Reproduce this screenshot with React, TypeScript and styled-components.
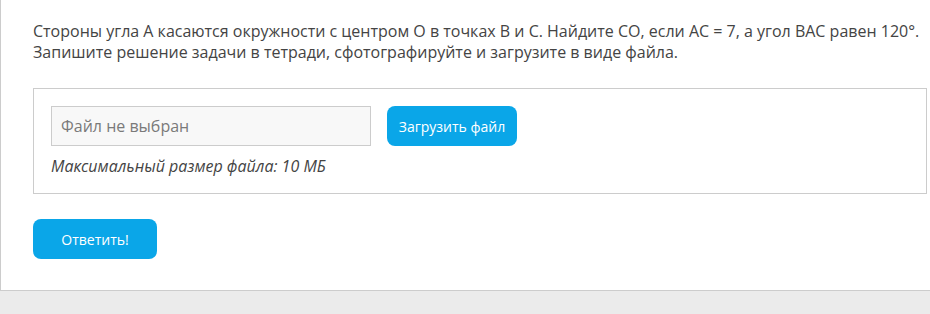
import React from "react";
import styled, { createGlobalStyle } from "styled-components";

const GlobalStyle = createGlobalStyle`
  html, body {
    margin: 0;
    padding: 0;
    background: #ebebeb;
  }
  body {
    font-family: "Open Sans", "Liberation Sans", sans-serif;
    color: #444;
  }
`;

const Panel = styled.div`
  background: #fff;
  border-left: 1px solid #ccc;
  border-bottom: 1px solid #ccc;
  padding: 21px 0 31px 32px;
`;

const Question = styled.p`
  margin: 0 0 25px;
  font-size: 16px;
  line-height: 21px;
  color: #444;
`;

const UploadBox = styled.div`
  width: 858px;
  border: 1px solid #ccc;
  padding: 17px 17px 16px;
`;

const Row = styled.div`
  display: flex;
  align-items: center;
  gap: 16px;
`;

const FileField = styled.div`
  box-sizing: border-box;
  width: 320px;
  height: 40px;
  border: 1px solid #ccc;
  background: #f8f8f8;
  padding: 0 9px;
  display: flex;
  align-items: center;
  font-size: 16px;
  color: #7a7a7a;
`;

const Button = styled.button<{ $wide?: number }>`
  box-sizing: border-box;
  width: ${(p) => p.$wide ?? 130}px;
  height: 40px;
  border: none;
  border-radius: 8px;
  background: #0aa6e8;
  color: #fff;
  font-family: "Open Sans", "Liberation Sans", sans-serif;
  font-size: 14px;
  padding: 0;
  cursor: pointer;
`;

const Hint = styled.div`
  margin-top: 9px;
  font-size: 16px;
  line-height: 22px;
  font-style: italic;
  color: #444;
`;

const Actions = styled.div`
  margin-top: 25px;
`;

export default function App() {
  return (
    <>
      <GlobalStyle />
      <Panel>
        <Question>
          Стороны угла A касаются окружности с центром O в точках B и C. Найдите CO, если AC = 7, а угол BAC равен 120°.
          <br />
          Запишите решение задачи в тетради, сфотографируйте и загрузите в виде файла.
        </Question>
        <UploadBox>
          <Row>
            <FileField>Файл не выбран</FileField>
            <Button>Загрузить файл</Button>
          </Row>
          <Hint>Максимальный размер файла: 10 МБ</Hint>
        </UploadBox>
        <Actions>
          <Button $wide={124}>Ответить!</Button>
        </Actions>
      </Panel>
    </>
  );
}
